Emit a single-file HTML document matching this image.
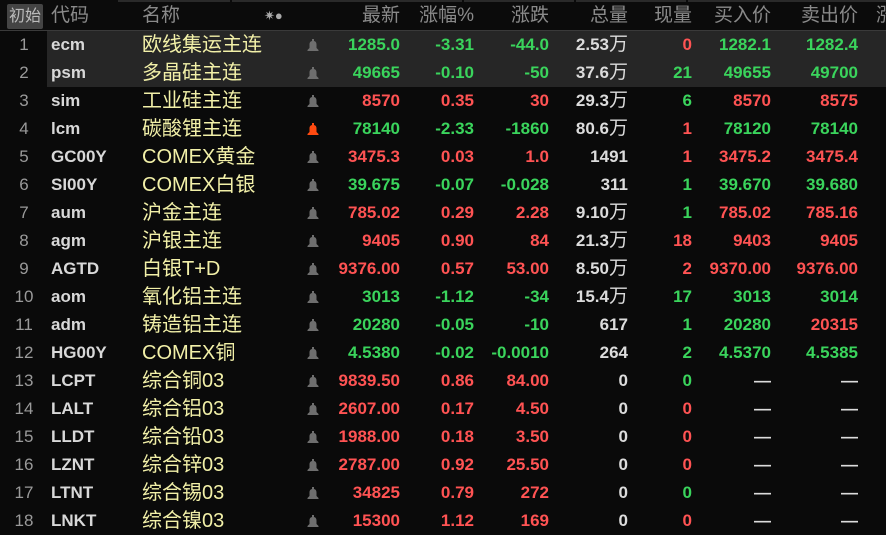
<!DOCTYPE html>
<html><head><meta charset="utf-8"><style>
body{margin:0;width:886px;height:530px;background:#0a0a0a;overflow:hidden;position:relative;font-family:"Liberation Sans","Noto Sans CJK SC",sans-serif}
.hdr{position:absolute;left:0;top:0;width:886px;height:30px;border-bottom:1px solid #3a3a3a;background:#0b0b0b}
.top{position:absolute;top:0;height:2px;background:#2a2a2a}
.h{position:absolute;top:3px;font-size:19px;color:#8a8a8a;line-height:26px;white-space:nowrap}
.btn{position:absolute;left:7px;top:4px;width:36px;height:25px;background:#444;border-radius:2px;color:#bbb;font-size:16px;line-height:25px;text-align:center}
.r{position:absolute;left:0;width:886px;height:28px;font-size:17px;font-weight:bold;line-height:28px}
.hl{background:#262626;left:47px;width:839px}
.c{position:absolute;white-space:nowrap}
.n{left:0;width:48px;text-align:center;color:#9a9a9a;font-weight:normal}
.cd{left:51px;color:#d8d8d8}
.nm{left:142px;color:#f2f0a8;font-size:20px;font-weight:normal}
.bell{left:307px;top:8px;width:12px;height:13px}
.v{text-align:right}
.g{color:#3ad45c}.rd{color:#ff5353}.w{color:#dcdcdc}
</style></head><body>
<div class="hdr">
<div class="top" style="left:118px;width:112px"></div>
<div class="top" style="left:232px;width:230px"></div>
<div class="top" style="left:464px;width:110px"></div>
<div class="top" style="left:576px;width:110px"></div>
<div class="top" style="left:688px;width:198px"></div>
<div class="btn">初始</div>
<div class="h" style="left:51px">代码</div>
<div class="h" style="left:142px">名称</div>
<div class="h" style="left:264px;font-size:13px;color:#aaa">✷●</div>
<div class="h" style="right:486px">最新</div>
<div class="h" style="right:412px">涨幅%</div>
<div class="h" style="right:337px">涨跌</div>
<div class="h" style="right:258px">总量</div>
<div class="h" style="right:194px">现量</div>
<div class="h" style="right:115px">买入价</div>
<div class="h" style="right:28px">卖出价</div>
<div class="h" style="left:876px">涨</div>
</div>
<svg width="0" height="0" style="position:absolute"><defs><symbol id="b" viewBox="0 0 12 13"><path d="M5 0h2v2c2 .5 2.5 2 2.5 3.5V9l2 2v1H.5v-1l2-2V5.5C2.5 4 3 2.5 5 2z"/></symbol></defs></svg>
<div id="rows"></div>
<script>
var D=[
["1","ecm","欧线集运主连",0,"g","1285.0","-3.31","-44.0","2.53万","rd","0","g","1282.1","g","1282.4",1],
["2","psm","多晶硅主连",0,"g","49665","-0.10","-50","37.6万","g","21","g","49655","g","49700",1],
["3","sim","工业硅主连",0,"rd","8570","0.35","30","29.3万","g","6","rd","8570","rd","8575"],
["4","lcm","碳酸锂主连",1,"g","78140","-2.33","-1860","80.6万","rd","1","g","78120","g","78140"],
["5","GC00Y","COMEX黄金",0,"rd","3475.3","0.03","1.0","1491","rd","1","rd","3475.2","rd","3475.4"],
["6","SI00Y","COMEX白银",0,"g","39.675","-0.07","-0.028","311","g","1","g","39.670","g","39.680"],
["7","aum","沪金主连",0,"rd","785.02","0.29","2.28","9.10万","g","1","rd","785.02","rd","785.16"],
["8","agm","沪银主连",0,"rd","9405","0.90","84","21.3万","rd","18","rd","9403","rd","9405"],
["9","AGTD","白银T+D",0,"rd","9376.00","0.57","53.00","8.50万","rd","2","rd","9370.00","rd","9376.00"],
["10","aom","氧化铝主连",0,"g","3013","-1.12","-34","15.4万","g","17","g","3013","g","3014"],
["11","adm","铸造铝主连",0,"g","20280","-0.05","-10","617","g","1","g","20280","rd","20315"],
["12","HG00Y","COMEX铜",0,"g","4.5380","-0.02","-0.0010","264","g","2","g","4.5370","g","4.5385"],
["13","LCPT","综合铜03",0,"rd","9839.50","0.86","84.00","0","g","0","w","—","w","—"],
["14","LALT","综合铝03",0,"rd","2607.00","0.17","4.50","0","rd","0","w","—","w","—"],
["15","LLDT","综合铅03",0,"rd","1988.00","0.18","3.50","0","rd","0","w","—","w","—"],
["16","LZNT","综合锌03",0,"rd","2787.00","0.92","25.50","0","rd","0","w","—","w","—"],
["17","LTNT","综合锡03",0,"rd","34825","0.79","272","0","g","0","w","—","w","—"],
["18","LNKT","综合镍03",0,"rd","15300","1.12","169","0","rd","0","w","—","w","—"]];
var h="";
D.forEach(function(d,i){var t=31+i*28;
if(d[15])h+='<div class="r hl" style="top:'+t+'px"></div>';
h+='<div class="r" style="top:'+t+'px">'+
'<span class="c n">'+d[0]+'</span><span class="c cd">'+d[1]+'</span><span class="c nm">'+d[2]+'</span>'+
'<svg class="c bell" style="fill:'+(d[3]?'#ff4a10':'#6e6e6e')+'"><use href="#b"/></svg>'+
'<span class="c v '+d[4]+'" style="right:486px">'+d[5]+'</span>'+
'<span class="c v '+d[4]+'" style="right:412px">'+d[6]+'</span>'+
'<span class="c v '+d[4]+'" style="right:337px">'+d[7]+'</span>'+
'<span class="c v w" style="right:258px">'+d[8].replace("万",'<span style="font-weight:normal;font-size:19px">万</span>')+'</span>'+
'<span class="c v '+d[9]+'" style="right:194px">'+d[10]+'</span>'+
'<span class="c v '+d[11]+'" style="right:115px">'+d[12]+'</span>'+
'<span class="c v '+d[13]+'" style="right:28px">'+d[14]+'</span></div>';});
document.getElementById("rows").innerHTML=h;
</script>
</body></html>
